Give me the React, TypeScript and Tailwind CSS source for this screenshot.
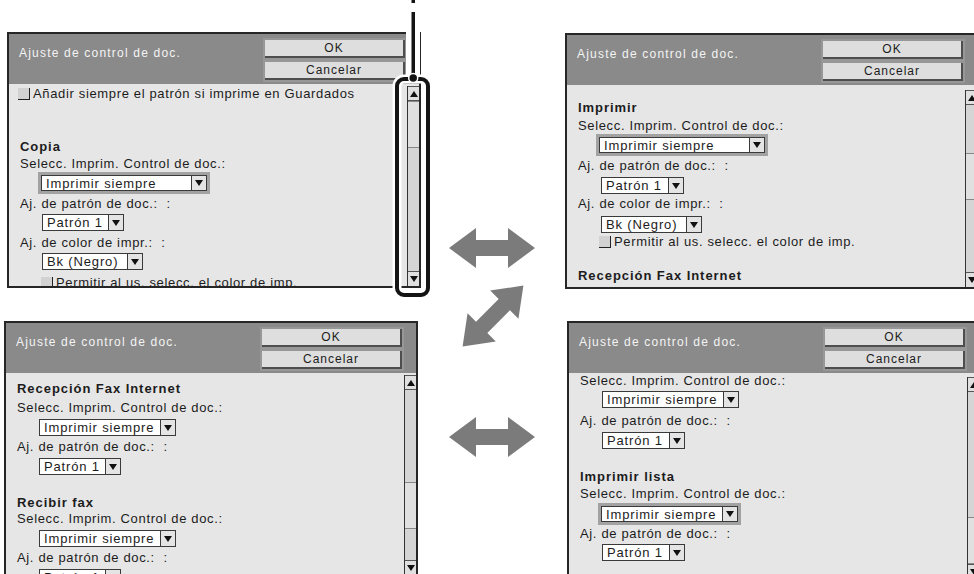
import React from 'react';

type Item =
  | { k: 'check'; t: string; mt: string; ml: string }
  | { k: 'head'; t: string; mt: string }
  | { k: 'label'; t: string; mt: string }
  | { k: 'select'; t: string; mt: string; w: string; frame?: boolean; ml: string };

const SELECC = 'Selecc. Imprim. Control de doc.:';
const PATRON = 'Aj. de patrón de doc.:  :';
const COLOR = 'Aj. de color de impr.:  :';

function Tri({ down }: { down?: boolean }) {
  return (
    <svg width="8" height="6" viewBox="0 0 8 6">
      <polygon points={down ? '0,0 8,0 4,6' : '0,6 8,6 4,0'} fill="#111" />
    </svg>
  );
}

function Select({ item }: { item: Extract<Item, { k: 'select' }> }) {
  const box = (
    <div
      className={`flex border border-[#3a3a3a] bg-white ${item.w} ${item.frame ? 'h-[16px]' : 'h-[17px]'}`}
    >
      <span className="flex-1 pl-[4px] leading-[15px] tracking-[0.85px] whitespace-nowrap overflow-hidden">
        {item.t}
      </span>
      <span className="w-[15px] border-l border-[#3a3a3a] bg-[#e4e4e4] flex items-center justify-center">
        <Tri down />
      </span>
    </div>
  );
  if (item.frame) {
    return <div className={`self-start bg-[#a2a2a2] p-[3px] ${item.mt} ${item.ml}`}>{box}</div>;
  }
  return <div className={`self-start ${item.mt} ${item.ml}`}>{box}</div>;
}

function Row({ item }: { item: Item }) {
  if (item.k === 'check') {
    return (
      <div className={`flex items-center gap-[3px] h-[14px] whitespace-nowrap ${item.mt} ${item.ml}`}>
        <span className="w-[12px] h-[12px] shrink-0 bg-[#d2d2d2] border-r border-b border-[#222]" />
        <span className="leading-[14px]">{item.t}</span>
      </div>
    );
  }
  if (item.k === 'head') {
    return (
      <div className={`h-[16px] leading-[16px] font-bold tracking-[0.95px] whitespace-nowrap ${item.mt}`}>
        {item.t}
      </div>
    );
  }
  if (item.k === 'label') {
    return <div className={`h-[16px] leading-[16px] whitespace-pre ${item.mt}`}>{item.t}</div>;
  }
  return <Select item={item} />;
}

function Panel({
  items,
  pos,
  barTop,
  thumbTop,
}: {
  items: Item[];
  pos: string;
  barTop: string;
  thumbTop: string;
}) {
  return (
    <div className={`w-[414px] h-[256px] shrink-0 border-2 border-[#262626] flex flex-col overflow-hidden ${pos}`}>
      {/* Header */}
      <div className="h-[50px] shrink-0 bg-[#8a8a8a] flex">
        <div className="pl-[10px] pt-[11px] text-[12px] leading-[16px] tracking-[1.2px] text-[#f4f4f4] whitespace-nowrap">
          Ajuste de control de doc.
        </div>
        <div className="ml-auto mr-[12px] mt-[4px] w-[144px] h-fit bg-[#979797] p-[2px] flex flex-col gap-[4px] text-[12px] tracking-[1px] text-[#1c1c1c]">
          <div className="h-[18px] bg-[#dedede] border-r-2 border-b-2 border-[#4e4e4e] text-center leading-[16px]">
            OK
          </div>
          <div className="h-[18px] bg-[#dedede] border-r-2 border-b-2 border-[#4e4e4e] text-center leading-[16px]">
            Cancelar
          </div>
        </div>
      </div>

      {/* Body */}
      <div className="flex flex-1 min-h-0 bg-[#e6e6e6]">
        <div className="flex-1 min-w-0 flex flex-col pl-[11px] overflow-hidden text-[13px] tracking-[0.65px] text-[#1c1c1c]">
          {items.map((it, i) => (
            <Row key={i} item={it} />
          ))}
        </div>
        <div className={`w-[12px] shrink-0 flex flex-col border-l border-[#333] bg-[#d5d5d5] ${barTop}`}>
          <div className="h-[15px] shrink-0 border-b border-t border-[#555] bg-[#e0e0e0] flex items-center justify-center">
            <Tri />
          </div>
          <div className={`h-[47px] shrink-0 border-y border-[#888] bg-[#e0e0e0] ${thumbTop}`} />
          <div className="flex-1" />
          <div className="h-[15px] shrink-0 border-t border-[#555] bg-[#e0e0e0] flex items-center justify-center">
            <Tri down />
          </div>
        </div>
      </div>
    </div>
  );
}

const panel1: Item[] = [
  { k: 'check', t: 'Añadir siempre el patrón si imprime en Guardados', mt: 'mt-[3px]', ml: 'ml-[-2px]' },
  { k: 'head', t: 'Copia', mt: 'mt-[38px]' },
  { k: 'label', t: SELECC, mt: 'mt-[1px]' },
  { k: 'select', t: 'Imprimir siempre', mt: 'mt-[0px]', w: 'w-[166px]', frame: true, ml: 'ml-[18px]' },
  { k: 'label', t: PATRON, mt: 'mt-[2px]' },
  { k: 'select', t: 'Patrón 1', mt: 'mt-[2px]', w: 'w-[82px]', ml: 'ml-[22px]' },
  { k: 'label', t: COLOR, mt: 'mt-[4px]' },
  { k: 'select', t: 'Bk (Negro)', mt: 'mt-[2px]', w: 'w-[101px]', ml: 'ml-[22px]' },
  { k: 'check', t: 'Permitir al us. selecc. el color de imp.', mt: 'mt-[6px]', ml: 'ml-[21px]' },
];

const panel2: Item[] = [
  { k: 'head', t: 'Imprimir', mt: 'mt-[15px]' },
  { k: 'label', t: SELECC, mt: 'mt-[2px]' },
  { k: 'select', t: 'Imprimir siempre', mt: 'mt-[0px]', w: 'w-[166px]', frame: true, ml: 'ml-[18px]' },
  { k: 'label', t: PATRON, mt: 'mt-[2px]' },
  { k: 'select', t: 'Patrón 1', mt: 'mt-[3px]', w: 'w-[83px]', ml: 'ml-[23px]' },
  { k: 'label', t: COLOR, mt: 'mt-[2px]' },
  { k: 'select', t: 'Bk (Negro)', mt: 'mt-[4px]', w: 'w-[101px]', ml: 'ml-[23px]' },
  { k: 'check', t: 'Permitir al us. selecc. el color de imp.', mt: 'mt-[2px]', ml: 'ml-[21px]' },
  { k: 'head', t: 'Recepción Fax Internet', mt: 'mt-[19px]' },
];

const panel3: Item[] = [
  { k: 'head', t: 'Recepción Fax Internet', mt: 'mt-[8px]' },
  { k: 'label', t: SELECC, mt: 'mt-[3px]' },
  { k: 'select', t: 'Imprimir siempre', mt: 'mt-[3px]', w: 'w-[137px]', ml: 'ml-[22px]' },
  { k: 'label', t: PATRON, mt: 'mt-[3px]' },
  { k: 'select', t: 'Patrón 1', mt: 'mt-[3px]', w: 'w-[82px]', ml: 'ml-[22px]' },
  { k: 'head', t: 'Recibir fax', mt: 'mt-[20px]' },
  { k: 'label', t: SELECC, mt: 'mt-[0px]' },
  { k: 'select', t: 'Imprimir siempre', mt: 'mt-[3px]', w: 'w-[137px]', ml: 'ml-[22px]' },
  { k: 'label', t: PATRON, mt: 'mt-[3px]' },
  { k: 'select', t: 'Patrón 1', mt: 'mt-[3px]', w: 'w-[82px]', ml: 'ml-[22px]' },
];

const panel4: Item[] = [
  { k: 'label', t: SELECC, mt: 'mt-[0px]' },
  { k: 'select', t: 'Imprimir siempre', mt: 'mt-[2px]', w: 'w-[137px]', ml: 'ml-[22px]' },
  { k: 'label', t: PATRON, mt: 'mt-[5px]' },
  { k: 'select', t: 'Patrón 1', mt: 'mt-[3px]', w: 'w-[83px]', ml: 'ml-[22px]' },
  { k: 'head', t: 'Imprimir lista', mt: 'mt-[20px]' },
  { k: 'label', t: SELECC, mt: 'mt-[1px]' },
  { k: 'select', t: 'Imprimir siempre', mt: 'mt-[1px]', w: 'w-[137px]', frame: true, ml: 'ml-[18px]' },
  { k: 'label', t: PATRON, mt: 'mt-[1px]' },
  { k: 'select', t: 'Patrón 1', mt: 'mt-[2px]', w: 'w-[83px]', ml: 'ml-[22px]' },
];

const ARROW = '-43,0 -16,-20 -16,-8 16,-8 16,-20 43,0 16,20 16,8 -16,8 -16,20';

export default function App() {
  return (
    <div className="relative w-[974px] h-[574px] overflow-hidden bg-white font-['Liberation_Sans',Arial,sans-serif]">
      <div className="grid grid-cols-[421px_144px_409px] h-full">
        {/* Left column */}
        <div className="flex flex-col">
          <Panel items={panel1} pos="ml-[7px] mt-[32px]" barTop="mt-[2px]" thumbTop="mt-[0px]" />
          <Panel items={panel3} pos="ml-[4px] mt-[33px]" barTop="mt-[2px]" thumbTop="mt-[92px]" />
        </div>

        {/* Arrows */}
        <svg className="w-[144px] h-[574px]" viewBox="421 0 144 574">
          <g fill="#7b7b7b">
            <polygon points={ARROW} transform="translate(492 248)" />
            <polygon points={ARROW} transform="translate(493 316) rotate(-45)" />
            <polygon points={ARROW} transform="translate(492 437)" />
          </g>
        </svg>

        {/* Right column */}
        <div className="flex flex-col">
          <Panel items={panel2} pos="mt-[33px]" barTop="mt-[5px]" thumbTop="mt-[48px]" />
          <Panel items={panel4} pos="ml-[2px] mt-[32px]" barTop="mt-[4px]" thumbTop="mt-[125px]" />
        </div>
      </div>

      {/* Callout around the scroll bar */}
      <svg
        className="absolute left-[380px] top-0 w-[60px] h-[305px] pointer-events-none"
        viewBox="380 0 60 305"
      >
        <rect x="406" y="6" width="14" height="74" fill="#fff" />
        <rect x="397" y="79" width="31" height="216" rx="7" fill="none" stroke="#fff" strokeWidth="9" />
        <rect x="397" y="79" width="31" height="216" rx="7" fill="none" stroke="#141414" strokeWidth="4" />
        <rect x="411.5" y="0" width="3.5" height="3" fill="#141414" />
        <rect x="411.5" y="12" width="3.5" height="66" fill="#141414" />
        <circle cx="413.2" cy="78" r="4.5" fill="#141414" stroke="#fff" strokeWidth="1.5" />
      </svg>
    </div>
  );
}
